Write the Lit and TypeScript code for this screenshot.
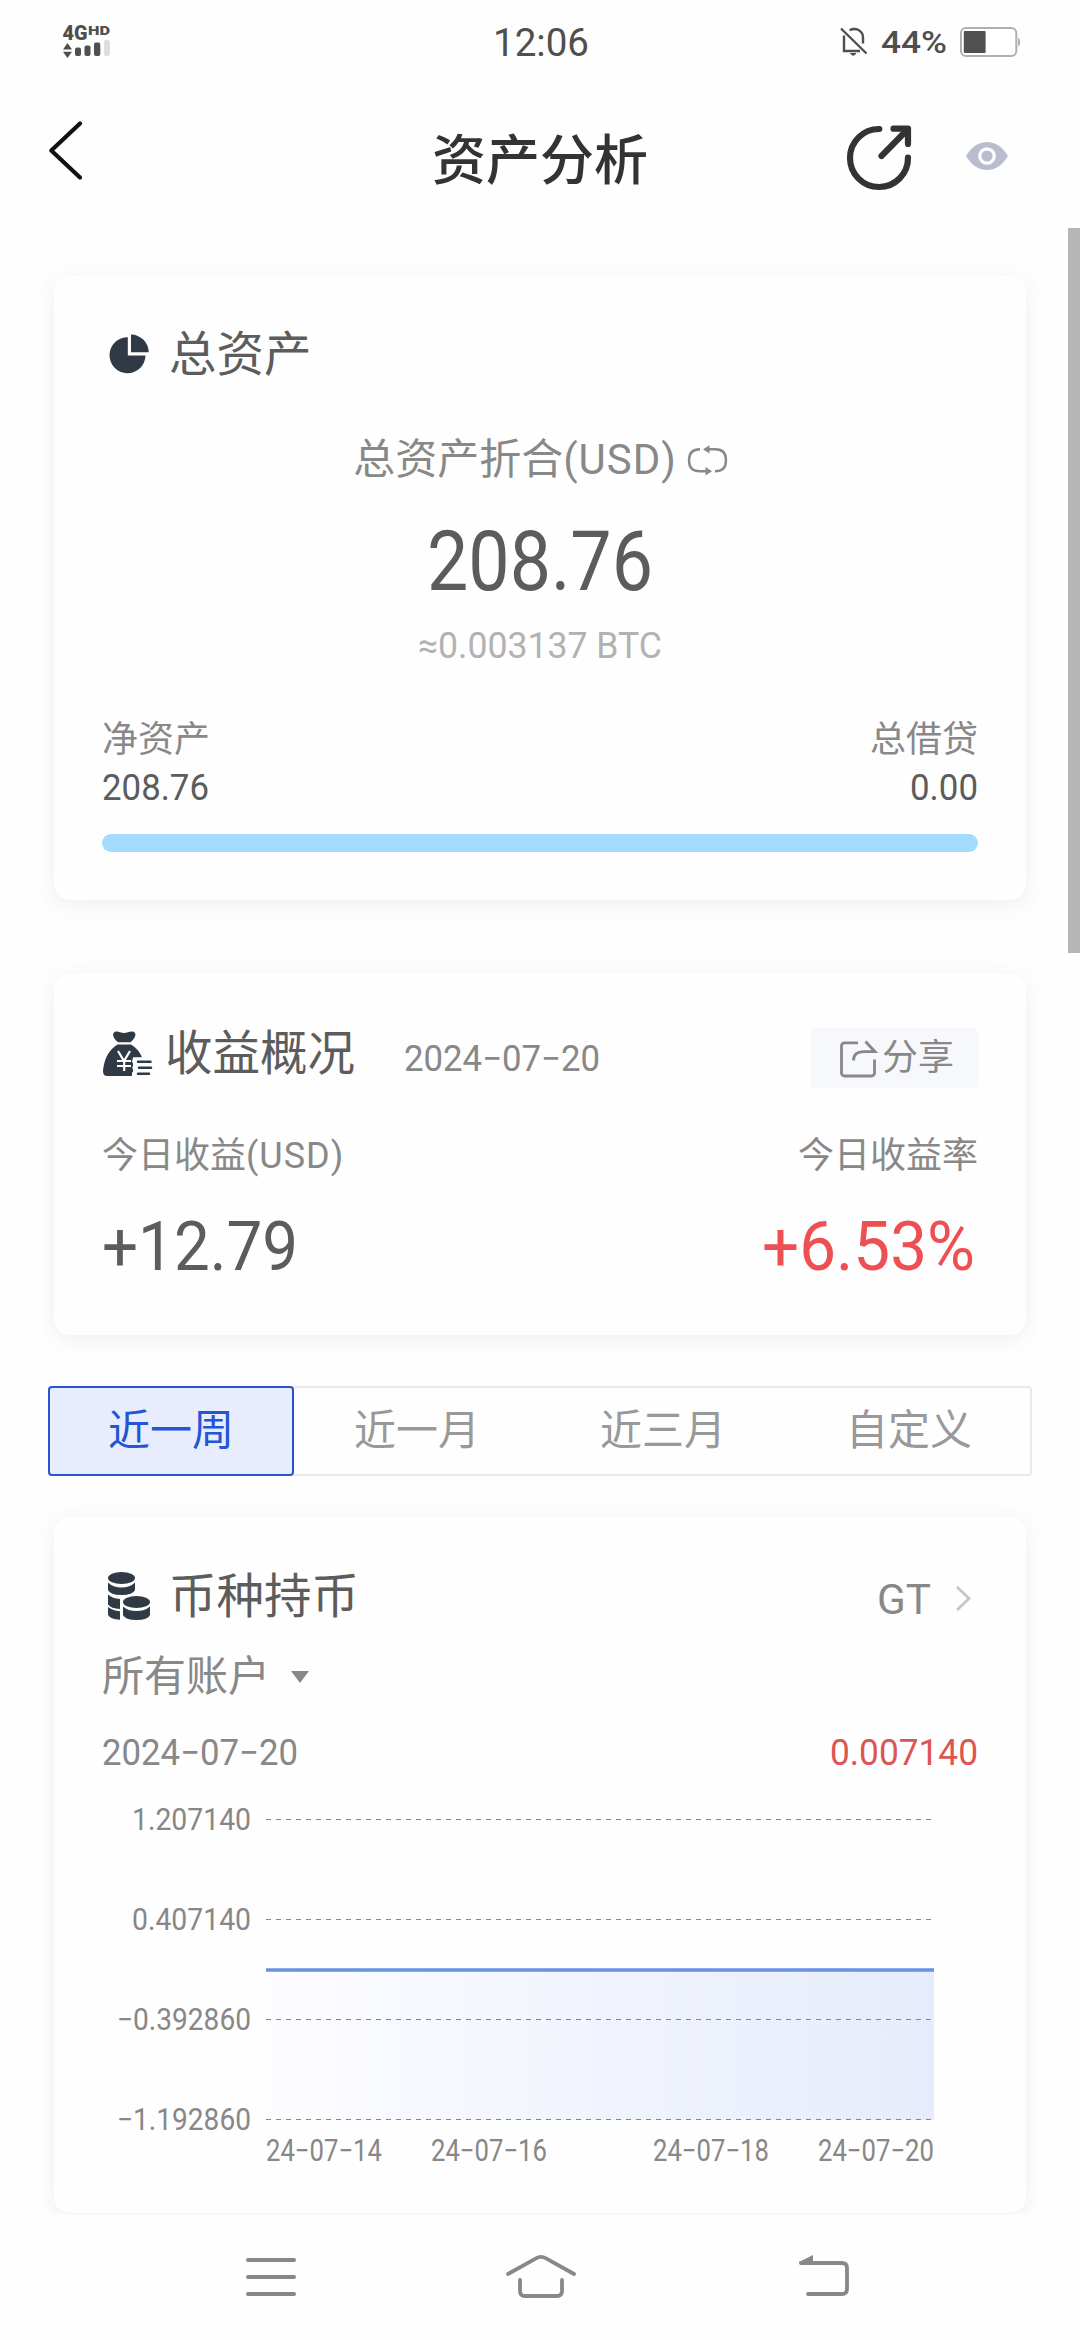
import { LitElement, html, svg, css } from "lit";
import { customElement, property } from "lit/decorators.js";

/** A figure set to a fixed width, centred vertically in its box. */
@customElement("fit-text")
class FitText extends LitElement {
  @property() text = "";
  @property({ type: Number }) width = 100;
  @property({ type: Number }) height = 40;
  @property({ type: Number }) size = 36;
  @property({ type: Number }) weight = 400;

  static styles = css`
    :host { display: block; flex: none; }
    .box { display: block; overflow: visible; }
    .glyphs { font-family: Roboto, "Liberation Sans", sans-serif; fill: currentColor; }
  `;

  render() {
    const base = this.height / 2 + this.size * 0.3555;
    return html`<svg class="box" width=${this.width} height=${this.height}>
      <text class="glyphs" x="0" y=${base} font-size=${this.size} font-weight=${this.weight}
        textLength=${this.width} lengthAdjust="spacingAndGlyphs">${this.text}</text>
    </svg>`;
  }
}

const GRID = [
  { y: 19.5, label: "1.207140", width: 119 },
  { y: 119.5, label: "0.407140", width: 119 },
  { y: 219.5, label: "−0.392860", width: 134 },
  { y: 319.5, label: "−1.192860", width: 134 },
];
const DAYS = [
  { x: 164, label: "24−07−14" },
  { x: 329, label: "24−07−16" },
  { x: 551, label: "24−07−18" },
  { x: 716, label: "24−07−20" },
];

@customElement("balance-chart")
class BalanceChart extends LitElement {
  static styles = css`
    :host { display: block; }
    .plot { display: block; }
    .label { font-family: Roboto, "Liberation Sans", sans-serif; font-size: 30.5px; fill: #878787; }
    .grid { stroke: #868686; stroke-width: 1; stroke-dasharray: 5 5; }
    .line { stroke: #6791e2; stroke-width: 3.4; }
  `;
  render() {
    return html`<svg class="plot" width="876" height="413" viewBox="0 0 876 413">
      <defs>
        <linearGradient id="fade" x1="0" x2="1" y1="0" y2="0">
          <stop offset="0" stop-color="#fdfdff" />
          <stop offset="0.5" stop-color="#f1f4fd" />
          <stop offset="1" stop-color="#e6ecfb" />
        </linearGradient>
      </defs>
      <rect x="164" y="170" width="668" height="150" fill="url(#fade)" />
      ${GRID.map((g) => svg`
        <line class="grid" x1="164" x2="832" y1=${g.y} y2=${g.y} />
        <text class="label" x=${149 - g.width} y=${g.y + 10.5} textLength=${g.width}
          lengthAdjust="spacingAndGlyphs">${g.label}</text>`)}
      <line class="line" x1="164" x2="832" y1="170" y2="170" />
      ${DAYS.map((d) => svg`
        <text class="label" x=${d.x} y="361" textLength="116"
          lengthAdjust="spacingAndGlyphs">${d.label}</text>`)}
    </svg>`;
  }
}

@customElement("app-root")
class AppRoot extends LitElement {
  static styles = css`
    :host {
      display: block; width: 1080px; height: 2340px; background: #fefefe; overflow: hidden;
      font-family: Roboto, "Noto Sans CJK SC", sans-serif; color: #888; line-height: 1;
    }
    svg { display: block; flex: none; overflow: visible; }
    .status { height: 84px; display: grid; grid-template-columns: 1fr auto 1fr; align-items: center; padding: 0 60px 0 61px; box-sizing: border-box; color: #4f4f4f; }
    .signal { margin-left: 2px; }
    .status-right { display: flex; align-items: center; justify-content: flex-end; }
    .carrier { font: 900 21px Roboto, sans-serif; fill: #4f4f4f; }
    .hd { font-size: 13.5px; }
    .bell { margin-right: 14px; }
    .battery { margin: 0 -1px 0 13px; }
    .header { height: 144px; display: grid; grid-template-columns: 1fr auto 1fr; align-items: start; padding: 0 72px 0 48px; box-sizing: border-box; }
    .back { margin-top: 37px; }
    .page-title { font-size: 54px; line-height: 60px; font-weight: 500; color: #333; margin: 48px 0 0 24px; }
    .actions { display: flex; justify-content: flex-end; align-items: center; gap: 54px; margin-top: 41px; }
    .eye { margin-bottom: 4px; }
    .scroll { height: 1986px; position: relative; overflow: hidden; padding: 48px 54px 0; box-sizing: border-box; }
    .thumb { position: absolute; right: 0; top: 0; width: 12px; height: 725px; background: #b6b6b6; }
    .card { background: #fefefe; border-radius: 16px; box-shadow: 0 4px 20px rgba(60, 80, 95, 0.09); padding: 54px 48px 0; box-sizing: border-box; }
    .total { height: 624px; }
    .profit { height: 361px; margin-top: 74px; }
    .coin { height: 696px; margin-top: 41px; padding-top: 53px; }
    .row { display: flex; justify-content: space-between; align-items: center; }
    .card-title { font-size: 47.5px; line-height: 50px; color: #5c5c5c; white-space: nowrap; }
    .head { display: flex; align-items: flex-start; }
    .pie { margin: 3px 20px 0 7px; }
    .centered { display: flex; justify-content: center; align-items: center; }
    .caption { font-size: 42px; line-height: 60px; margin-top: 50px; gap: 11px; }
    .unit { letter-spacing: 1px; }
    .amount { margin-top: 30px; color: #5c5c5c; }
    .approx { margin-top: 20px; color: #b2b2b2; }
    .small { font-size: 36px; line-height: 40px; }
    .labels { margin-top: 50px; }
    .values { margin-top: 7px; color: #5c5c5c; }
    .bar { height: 18px; margin-top: 27px; border-radius: 9px; background: #a3dbff; }
    .profit-head { display: flex; height: 60px; }
    .bag { margin: 3px 13px 0 1px; }
    .profit-title { line-height: 53px; }
    .date { margin: 10px 0 0 49px; }
    .share { margin-left: auto; width: 168px; height: 60px; box-sizing: border-box; padding: 0 0 1px 30px; background: #f7f8fb; border-radius: 5px; display: flex; align-items: center; gap: 4px; font-size: 36px; }
    .share-icon { margin-top: 3px; }
    .profit-labels { margin-top: 48px; }
    .profit-values { margin-top: 35px; color: #5c5c5c; }
    .up { color: #ee4f52; margin-right: 3px; }
    .tabs { display: flex; height: 90px; margin: 51px -6px 0; border-radius: 4px; box-shadow: inset 0 0 0 2px #eaeaea; }
    .tab { flex: 1; display: flex; align-items: center; justify-content: center; font-size: 42px; color: #999; border-radius: 4px; }
    .active { color: #2455d4; background: #e7edfc; box-shadow: inset 0 0 0 2px #2854cc; }
    .coins { margin: 2px 19px 0 6px; }
    .coin-title { line-height: 54px; }
    .symbol { margin-left: auto; }
    .chevron { margin: 16px 8px 0 25px; }
    .account { display: flex; align-items: center; font-size: 42px; line-height: 50px; margin-top: 24px; gap: 21px; }
    .latest { margin-top: 30px; }
    .down { color: #dd5553; }
    .chart { margin-top: 28px; }
    .nav { height: 126px; display: flex; background: #fefefe; justify-content: space-between; padding: 41px 230px 0 246px; box-sizing: border-box; }
    .home { margin-right: 12px; }
  `;

  render() {
    return html`
      <div class="status">
        <svg class="signal" width="48" height="36" viewBox="63 24 48 36">
          <text class="carrier" x="62.5" y="40" textLength="25" lengthAdjust="spacingAndGlyphs">4G</text>
          <text class="carrier hd" x="88" y="34.8" textLength="22" lengthAdjust="spacingAndGlyphs">HD</text>
          <path fill="#4f4f4f" d="M63 49.5 67.5 43 72 49.5ZM63 51.8h9L67.5 58Z" />
          <rect x="75" y="47.5" width="6" height="8.5" rx="2" fill="#4f4f4f" />
          <rect x="84.5" y="45.5" width="6" height="10.5" rx="2" fill="#4f4f4f" />
          <rect x="94" y="42.5" width="6.3" height="13.5" rx="2" fill="#4f4f4f" />
          <rect x="104" y="40" width="6" height="16" rx="2" fill="#dedede" />
        </svg>
        <fit-text text="12:06" width="96" height="40" size="38.5"></fit-text>
        <div class="status-right">
          <svg class="bell" width="27" height="30" viewBox="840 28 27 30" fill="none" stroke="#4f4f4f" stroke-width="2.4">
            <path d="M841 29.5 866.5 54.5" />
            <path d="M844 36.5V52H860M850 31.3a8.500 8.500 0 0 1 13 7.700V44.500" />
            <path d="M849.500 30.800q3.800-3.200 7.600 0z M850.500 54.500h5.500l-2.700 2z" fill="#4f4f4f" stroke-width="1" />
          </svg>
          <fit-text text="44%" width="66" height="42" size="31" weight="500"></fit-text>
          <svg class="battery" width="61" height="30" viewBox="960 27 61 30">
            <rect x="961" y="28" width="55.3" height="28" rx="5" fill="#fff" stroke="#b0b0b0" stroke-width="2" />
            <rect x="963.8" y="31" width="21.8" height="22" rx="1" fill="#505050" />
            <path d="M1018 37.5q2.3 1 2.3 4.5t-2.3 4.500z" fill="#b0b0b0" />
          </svg>
        </div>
      </div>
      <div class="header">
        <svg class="back" width="36" height="60" viewBox="48 121 36 60" fill="none" stroke="#111" stroke-width="4.2" stroke-linecap="round" stroke-linejoin="round">
          <path d="M80 123.500 51.300 150.500 80 177.500" />
        </svg>
        <div class="page-title">资产分析</div>
        <div class="actions">
          <svg width="66" height="66" viewBox="846 125 66 66" fill="none" stroke="#333" stroke-width="6.200" stroke-linecap="round" stroke-linejoin="round">
            <path d="M879.300 129A29 29 0 1 0 908 157.500" />
            <path d="M881.500 156 907 130M893.500 128.700H908V144" />
          </svg>
          <svg class="eye" width="42" height="28" viewBox="966 142 42 28">
            <path d="M966 156q8.500-14 21-14t21 14q-8.500 14-21 14t-21-14z" fill="#b9bdce" />
            <circle cx="987" cy="156" r="7.200" fill="none" stroke="#fff" stroke-width="3.200" />
          </svg>
        </div>
      </div>

      <div class="scroll">
        <div class="card total">
          <div class="head">
            <svg class="pie" width="40" height="40" viewBox="109 333 40 40" fill="#2f3a45">
              <path d="M127.800 337.200V355.600H145.500A18 18 0 1 1 127.800 337.200Z" />
              <path d="M131 334.500A17.800 17.800 0 0 1 148.700 352.300H131Z" />
            </svg>
            <div class="card-title">总资产</div>
          </div>
          <div class="centered caption">
            <span>总资产折合<span class="unit">(USD)</span></span>
            <svg width="39" height="30" viewBox="688 444 39 30" fill="none" stroke="#888" stroke-width="2.400">
              <path d="M700 448.300Q689 448.300 689 459.500 689 470.300 700 470.300H706" />
              <path d="M709 448.300H715.500Q726 448.300 726 459.500 726 470.300 715 470.300" />
              <path d="M703 448.300 709.500 444.300V452.500ZM712 470.300 705.500 466.100V474.400Z" fill="#888" stroke="none" />
            </svg>
          </div>
          <div class="centered amount"><fit-text text="208.76" width="226" height="80" size="84"></fit-text></div>
          <div class="centered approx"><fit-text text="≈0.003137 BTC" width="244" height="50" size="36"></fit-text></div>
          <div class="row labels small"><span>净资产</span><span>总借贷</span></div>
          <div class="row values">
            <fit-text text="208.76" width="107" height="40" size="36"></fit-text>
            <fit-text text="0.00" width="68" height="40" size="36"></fit-text>
          </div>
          <div class="bar"></div>
        </div>

        <div class="card profit">
          <div class="profit-head">
            <svg class="bag" width="49" height="45" viewBox="103 1030.500 49 45" fill="#2f3a45">
              <path d="M113.500 1032.500c3-3.500 6.500 0 10.500 0s8-3.500 11 0c1.500 2.500-1.500 7-4.500 9.200h-12.500c-3-2.200-6-6.700-4.500-9.200z" />
              <path d="M117.500 1044h13.500c6 3.500 10 9 11.500 14.500h-9.500v17h-26c-4 0-4.500-4-3.500-9 1.500-9 6-18 14-22.500z" />
              <path d="M118 1050.500 124 1060.500 130 1050.500M117 1060.500h14M117 1065.500h14M124.200 1060v10.500" fill="none" stroke="#fefefe" stroke-width="2.200" />
              <path d="M133 1056.800h10l2 3h-9l-2 2.500v13.500h-2v-3.500l2-2-2-3 2-3-2-3z" fill="#fefefe" />
              <path d="M138 1061.300h12.500M139 1067.300h12M138 1073.300h11" stroke="#2f3a45" stroke-width="2.500" stroke-linecap="round" />
            </svg>
            <div class="card-title profit-title">收益概况</div>
            <fit-text class="date" text="2024−07−20" width="196" height="40" size="36"></fit-text>
            <div class="share">
              <svg class="share-icon" width="38" height="37" viewBox="840 1040.500 38 37" fill="none" stroke="#888" stroke-width="2.800">
                <path d="M858 1042.300H844.500a3 3 0 0 0-3 3V1072.500a3 3 0 0 0 3 3H871.500a3 3 0 0 0 3-3V1059" />
                <path d="M865.500 1041 875 1051.200H864Q853.500 1051.200 853.500 1060" />
              </svg>
              <span>分享</span>
            </div>
          </div>
          <div class="row profit-labels small"><span>今日收益<span class="unit">(USD)</span></span><span>今日收益率</span></div>
          <div class="row profit-values">
            <fit-text text="+12.79" width="196" height="70" size="68"></fit-text>
            <fit-text class="up" text="+6.53%" width="213" height="70" size="68"></fit-text>
          </div>
        </div>

        <div class="tabs">
          <div class="tab active">近一周</div>
          <div class="tab">近一月</div>
          <div class="tab">近三月</div>
          <div class="tab">自定义</div>
        </div>

        <div class="card coin">
          <div class="head">
            <svg class="coins" width="42" height="48" viewBox="108 1572 42 48">
              <g fill="#2f3a45">
                <ellipse cx="121.500" cy="1578" rx="13.500" ry="6" />
                <path d="M108 1582.500q5 5 13.500 5t13.500-5v7.500q-2 5-13.500 5t-13.500-5z" />
                <path d="M108 1594.500q4.500 4 12 4.500v10q-9-.5-12-4.500z" />
                <path d="M108 1607q4 3.500 12 4.200v8.500q-10-.5-12-5z" />
                <ellipse cx="136.500" cy="1602" rx="16.500" ry="8.500" fill="#fefefe" />
                <ellipse cx="136.500" cy="1602" rx="13.500" ry="6" />
                <path d="M123 1606.500q5 4.500 13.500 4.500t13.500-4.500v8.500q-2 5-13.500 5t-13.500-5z" />
              </g>
            </svg>
            <div class="card-title coin-title">币种持币</div>
            <fit-text class="symbol" text="GT" width="54" height="58" size="42"></fit-text>
            <svg class="chevron" width="14" height="26" viewBox="956 1586 14 26" fill="none" stroke="#c6c6c6" stroke-width="2.800">
              <path d="M957 1587 969 1598.500 957 1610" />
            </svg>
          </div>
          <div class="account">
            <span>所有账户</span>
            <svg width="18" height="12" viewBox="0 0 18 12"><path d="M0 0H18L9 12Z" fill="#888" /></svg>
          </div>
          <div class="row latest">
            <fit-text text="2024−07−20" width="196" height="40" size="36"></fit-text>
            <fit-text class="down" text="0.007140" width="148" height="40" size="36"></fit-text>
          </div>
          <balance-chart class="chart"></balance-chart>
        </div>
        <div class="thumb"></div>
      </div>

      <div class="nav">
        <svg width="50" height="44" viewBox="246 2255 50 44" stroke="#888" stroke-width="4" stroke-linecap="round">
          <path d="M248 2260H294M248 2277H294M248 2294H294" />
        </svg>
        <svg class="home" width="70" height="44" viewBox="506 2255 70 44" fill="none" stroke="#888" stroke-width="3.800" stroke-linecap="round">
          <path d="M508 2274 536 2258.300Q541 2255.500 546 2258.300L574 2274" />
          <path d="M520 2280V2291Q520 2296 525 2296H557Q562 2296 562 2291V2280" />
        </svg>
        <svg width="52" height="44" viewBox="798 2255 52 44" fill="none" stroke="#888" stroke-width="3.800" stroke-linecap="round">
          <path d="M801 2263H842Q847 2263 847 2268V2289Q847 2294 842 2294H808" />
          <path d="M799 2262 813 2255V2263H799Z" fill="#888" stroke="none" />
        </svg>
      </div>
    `;
  }
}
